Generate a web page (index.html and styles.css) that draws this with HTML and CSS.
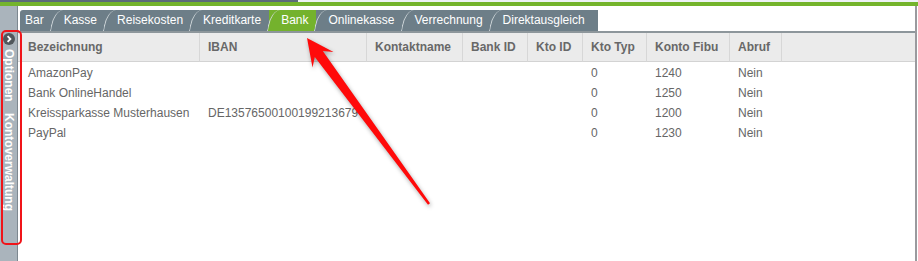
FILE: index.html
```html
<!DOCTYPE html>
<html lang="de">
<head>
  <meta charset="UTF-8" />
  <title>Kontoverwaltung</title>
  <link rel="stylesheet" href="styles.css">
</head>
<body>

<div class="topline"></div>
<div class="greenline"></div>

<div class="layout">
  <aside class="sidebar">
    <span class="toggle">
      <svg width="12" height="12" viewBox="0 0 12 12">
        <circle cx="6" cy="6" r="6" fill="#50575c"/>
        <path d="M4.6 3.2 L7.4 6 L4.6 8.8" fill="none" stroke="#fff" stroke-width="1.8"/>
      </svg>
    </span>
    <span class="side-label">Optionen</span>
    <span class="side-label">Kontoverwaltung</span>
  </aside>

  <section class="panel">
    <nav class="tabs">
      <div class="tab"><span>Bar</span></div>
      <div class="tab"><span>Kasse</span></div>
      <div class="tab"><span>Reisekosten</span></div>
      <div class="tab"><span>Kreditkarte</span></div>
      <div class="tab active"><span>Bank</span></div>
      <div class="tab"><span>Onlinekasse</span></div>
      <div class="tab"><span>Verrechnung</span></div>
      <div class="tab"><span>Direktausgleich</span></div>
    </nav>
    <div class="tabline"></div>

    <table class="grid">
      <colgroup>
        <col style="width:182px">
        <col style="width:167px">
        <col style="width:96px">
        <col style="width:65px">
        <col style="width:55px">
        <col style="width:64px">
        <col style="width:83px">
        <col style="width:52px">
        <col>
      </colgroup>
      <thead>
        <tr>
          <th>Bezeichnung</th>
          <th>IBAN</th>
          <th>Kontaktname</th>
          <th>Bank ID</th>
          <th>Kto ID</th>
          <th>Kto Typ</th>
          <th>Konto Fibu</th>
          <th>Abruf</th>
          <th></th>
        </tr>
      </thead>
      <tbody>
        <tr><td>AmazonPay</td><td></td><td></td><td></td><td></td><td>0</td><td>1240</td><td>Nein</td><td></td></tr>
        <tr><td>Bank OnlineHandel</td><td></td><td></td><td></td><td></td><td>0</td><td>1250</td><td>Nein</td><td></td></tr>
        <tr><td>Kreissparkasse Musterhausen</td><td>DE13576500100199213679</td><td></td><td></td><td></td><td>0</td><td>1200</td><td>Nein</td><td></td></tr>
        <tr><td>PayPal</td><td></td><td></td><td></td><td></td><td>0</td><td>1230</td><td>Nein</td><td></td></tr>
      </tbody>
    </table>
  </section>
</div>

<!-- annotations drawn over the screenshot -->
<div class="mark-box"></div>
<svg class="mark-arrow" width="918" height="261" viewBox="0 0 918 261">
  <polygon fill="#ff0a0a" points="307,38 333.5,52.1 322.8,51.1 430,203.2 428,204.8 314.8,57.1 312.5,67.5"/>
</svg>

</body>
</html>
```

FILE: styles.css
```css
* {
  margin: 0;
  padding: 0;
  box-sizing: border-box;
}
body {
  width: 918px;
  height: 261px;
  overflow: hidden;
  position: relative;
  font-family: "Liberation Sans", Arial, sans-serif;
  font-size: 12px;
  background: #fff;
}

.topline {
  height: 2px;
  background: linear-gradient(to right, #5c6b7a 0, #5c6b7a 298px, #eef2f6 298px);
}
.greenline {
  height: 4px;
  background: #74b42c;
}

.layout {
  display: flex;
  height: 255px;
}

.sidebar {
  width: 18px;
  background: #aab4bc;
  border-right: 1px solid #7d8890;
  display: flex;
  flex-direction: column;
  align-items: center;
  padding-top: 27px;
}
.toggle svg {
  display: block;
}
.side-label {
  writing-mode: vertical-rl;
  color: #fff;
  font-weight: bold;
  line-height: 14px;
  margin-top: 11px;
}
.toggle + .side-label {
  margin-top: 4px;
}

.panel {
  flex: 1;
  border-right: 2px solid #9a9a9e;
  margin-right: 1px;
  display: flex;
  flex-direction: column;
}

.tabs {
  display: flex;
  height: 21px;
  margin: 4px 0 0 2px;
}
.tab {
  position: relative;
  background: #6d7e88;
  color: #fff;
  line-height: 21px;
  padding: 0 8px 0 12px;
  white-space: nowrap;
  cursor: pointer;
}
.tab:first-child {
  padding-left: 5px;
  border-top-left-radius: 3px;
}
.tab:last-child {
  padding-right: 13px;
}
.tab + .tab::before {
  content: '';
  position: absolute;
  left: -2px;
  top: 0;
  bottom: 0;
  width: 14px;
  background: inherit;
  border-left: 1px solid #d3dadd;
  border-top-left-radius: 10px 17px;
  transform: skewX(-9deg);
  transform-origin: bottom left;
}
.tab span {
  position: relative;
}
.tab.active {
  background: #74b22d;
}
.tabline {
  height: 2px;
  background: #8d969b;
}

.grid {
  width: 100%;
  table-layout: fixed;
  border-collapse: separate;
  border-spacing: 0;
  color: #666;
}
.grid th {
  height: 29px;
  background: #ebebeb;
  border-right: 1px solid #d7d7d7;
  border-bottom: 1px solid #d3d3d3;
  text-align: left;
  font-weight: bold;
  color: #686868;
  padding: 0 8px;
  white-space: nowrap;
}
.grid th:last-child {
  border-right: none;
}
.grid td {
  line-height: 20px;
  padding: 0 8px;
  white-space: nowrap;
}
.grid th:first-child,
.grid td:first-child {
  padding-left: 10px;
}
.grid tbody tr:first-child td {
  padding-top: 1px;
}

.mark-box {
  position: absolute;
  left: 1px;
  top: 30px;
  width: 21px;
  height: 215px;
  border: 2px solid #f01419;
  border-radius: 5px;
}
.mark-arrow {
  position: absolute;
  left: 0;
  top: 0;
  pointer-events: none;
  filter: drop-shadow(1px 2px 2px rgba(0,0,0,0.35));
}
```
